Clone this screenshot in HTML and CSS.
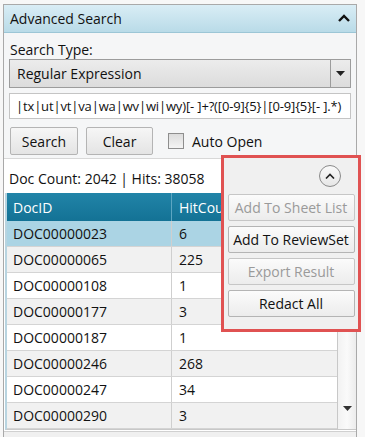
FILE: index.html
```html
<!DOCTYPE html>
<html lang="en">
<head>
    <meta charset="UTF-8">
    <meta name="viewport" content="width=device-width, initial-scale=1.0">
    <title>Advanced Search</title>
    <link rel="stylesheet" href="styles.css">
</head>
<body>
    <div class="panel">
        <div class="panel-head">
            <span>Advanced Search</span>
            <svg class="head-chevron" width="12" height="8" viewBox="0 0 12 8"><path d="M1 7 L6 2 L11 7" fill="none" stroke="#111" stroke-width="2.4"/></svg>
        </div>
        <div class="panel-body">
            <div class="field-label">Search Type:</div>
            <div class="combo">
                <span class="combo-text">Regular Expression</span>
                <span class="combo-btn"><svg width="9" height="5" viewBox="0 0 9 5"><path d="M0 0 H9 L4.5 5 Z" fill="#222"/></svg></span>
            </div>
            <div class="text-input">|tx|ut|vt|va|wa|wv|wi|wy)[- ]+?([0-9]{5}|[0-9]{5}[- ].*)</div>
            <div class="button-row">
                <button class="btn btn-search">Search</button>
                <button class="btn btn-clear">Clear</button>
                <label class="check"><span class="check-box"></span>Auto Open</label>
            </div>
        </div>
        <div class="results">
            <div class="counts">Doc Count: 2042 | Hits: 38058</div>
            <div class="grid">
                <div class="grid-main">
                    <div class="grid-head">
                        <div class="col-doc">DocID</div>
                        <div class="col-hit">HitCount</div>
                    </div>
                    <div class="grid-row selected"><div class="col-doc">DOC00000023</div><div class="col-hit">6</div></div>
                    <div class="grid-row alt"><div class="col-doc">DOC00000065</div><div class="col-hit">225</div></div>
                    <div class="grid-row"><div class="col-doc">DOC00000108</div><div class="col-hit">1</div></div>
                    <div class="grid-row alt"><div class="col-doc">DOC00000177</div><div class="col-hit">3</div></div>
                    <div class="grid-row"><div class="col-doc">DOC00000187</div><div class="col-hit">1</div></div>
                    <div class="grid-row alt"><div class="col-doc">DOC00000246</div><div class="col-hit">268</div></div>
                    <div class="grid-row"><div class="col-doc">DOC00000247</div><div class="col-hit">34</div></div>
                    <div class="grid-row alt"><div class="col-doc">DOC00000290</div><div class="col-hit">3</div></div>
                </div>
                <div class="scrollbar">
                    <svg width="9" height="5" viewBox="0 0 9 5"><path d="M0 0 H9 L4.5 5 Z" fill="#333"/></svg>
                </div>
            </div>
            <div class="splitter"><span class="grip"></span><span class="grip"></span><span class="grip"></span><span class="grip"></span></div>
        </div>
    </div>

    <div class="popup">
        <div class="popup-top">
            <span class="round-btn"><svg width="10" height="6" viewBox="0 0 10 6"><path d="M1 5.5 L5 1.5 L9 5.5" fill="none" stroke="#222" stroke-width="1.6"/></svg></span>
        </div>
        <button class="btn pop-btn" disabled>Add To Sheet List</button>
        <button class="btn pop-btn">Add To ReviewSet</button>
        <button class="btn pop-btn" disabled>Export Result</button>
        <button class="btn pop-btn">Redact All</button>
    </div>
</body>
</html>
```

FILE: styles.css
```css
body {
    margin: 0;
    background-color: #f7f7f7;
    font-family: "Open Sans", "Noto Sans", sans-serif;
    font-size: 14px;
    color: #111;
    width: 365px;
    height: 437px;
    overflow: hidden;
    position: relative;
}
.panel {
    margin: 4px 8px 0 3px;
    border: 1px solid #a9a9a9;
    border-bottom: none;
    background-color: #f5f6f7;
    display: flex;
    flex-direction: column;
}
.panel-head {
    flex: none;
    height: 27px;
    display: flex;
    align-items: center;
    justify-content: space-between;
    padding: 0 6px 0 6px;
    background: linear-gradient(#d9edf5, #b9dbe8);
    border-bottom: 1px solid #9cc6d6;
}
.head-chevron {
    margin-top: -2px;
}
.panel-body {
    flex: none;
    padding: 8px 5px 0 5px;
}
.field-label {
    line-height: 18px;
    margin-left: 1px;
}
.combo {
    height: 27px;
    display: flex;
    border: 1px solid #9c9c9c;
    background: linear-gradient(#ececec, #dcdcdc);
}
.combo-text {
    flex: 1;
    padding-left: 7px;
    line-height: 28px;
}
.combo-btn {
    width: 19px;
    border-left: 1px solid #9c9c9c;
    display: flex;
    align-items: center;
    justify-content: center;
}
.text-input {
    margin-top: 5px;
    height: 24px;
    border: 1px solid #c4c4c4;
    background-color: #fff;
    line-height: 25px;
    padding-left: 6px;
    font-size: 13px;
    letter-spacing: -0.15px;
    white-space: nowrap;
    overflow: hidden;
}
.button-row {
    display: flex;
    align-items: center;
    margin-top: 8px;
    height: 28px;
    padding-bottom: 3px;
}
.btn {
    font-family: inherit;
    font-size: 14px;
    color: #111;
    height: 28px;
    border: 1px solid #b4b4b4;
    border-radius: 2px;
    background: linear-gradient(#f6f6f6, #e4e4e4);
    padding: 0;
}
.btn-search {
    width: 68px;
    margin-left: 1px;
}
.btn-clear {
    width: 67px;
    margin-left: 8px;
}
.check {
    display: flex;
    align-items: center;
    margin-left: 15px;
}
.check-box {
    width: 14px;
    height: 14px;
    border: 1px solid #8e8e8e;
    background: linear-gradient(#dcdcdc, #f4f4f4);
    margin-right: 8px;
}
.results {
    flex: none;
    display: flex;
    flex-direction: column;
    background-color: #fff;
    border-top: 1px solid #d8d8d8;
}
.counts {
    height: 34px;
    line-height: 40px;
    padding-left: 5px;
}
.grid {
    display: flex;
    border-left: 2px solid #b8d4e0;
    border-bottom: 1px solid #c8c8c8;
    margin-left: 1px;
}
.grid-main {
    width: 330px;
    border-right: 1px solid #c8c8c8;
}
.grid-head, .grid-row {
    display: flex;
}
.grid-head {
    height: 28px;
    line-height: 30px;
    color: #fff;
    background: linear-gradient(#2184a8, #137295);
}
.grid-head .col-doc {
    border-right: 1px solid #5da6c2;
}
.grid-head .col-hit {
    width: 45px;
    overflow: hidden;
    white-space: nowrap;
}
.grid-row {
    height: 25px;
    line-height: 26px;
    border-bottom: 1px solid #d4d4d4;
}
.grid-row.alt {
    background-color: #f1f1f1;
}
.grid-row.selected {
    background-color: #abd4e4;
}
.col-doc {
    width: 158px;
    padding-left: 6px;
    border-right: 1px solid #cfcfcf;
}
.col-hit {
    padding-left: 7px;
}
.scrollbar {
    flex: 1;
    background: linear-gradient(90deg, #f2f2f2, #fafafa, #ececec);
    display: flex;
    align-items: flex-end;
    justify-content: center;
    padding-bottom: 18px;
}
.splitter {
    margin-top: 1px;
    height: 7px;
    background-color: #f0f0f0;
    border-top: 1px solid #d0d0d0;
    display: flex;
    justify-content: center;
    align-items: flex-end;
    gap: 2px;
}
.grip {
    width: 2px;
    height: 2px;
    background-color: #222;
}
.popup {
    position: absolute;
    left: 221px;
    top: 155px;
    width: 134px;
    height: 171px;
    border: 3px solid #e05252;
    background-color: #f0f0f0;
    display: flex;
    flex-direction: column;
    align-items: center;
}
.popup-top {
    align-self: stretch;
    display: flex;
    justify-content: flex-end;
    padding-right: 17px;
    height: 36px;
    align-items: center;
}
.round-btn {
    width: 20px;
    height: 20px;
    border: 1px solid #8a8a8a;
    border-radius: 50%;
    background: linear-gradient(#fafafa, #e6e6e6);
    display: flex;
    align-items: center;
    justify-content: center;
}
.pop-btn {
    width: 127px;
    height: 27px;
    margin-bottom: 5px;
    background: linear-gradient(#fbfbfb, #ececec);
}
.pop-btn:disabled {
    color: #9a9a9a;
    border-color: #c6c6c6;
}
```
